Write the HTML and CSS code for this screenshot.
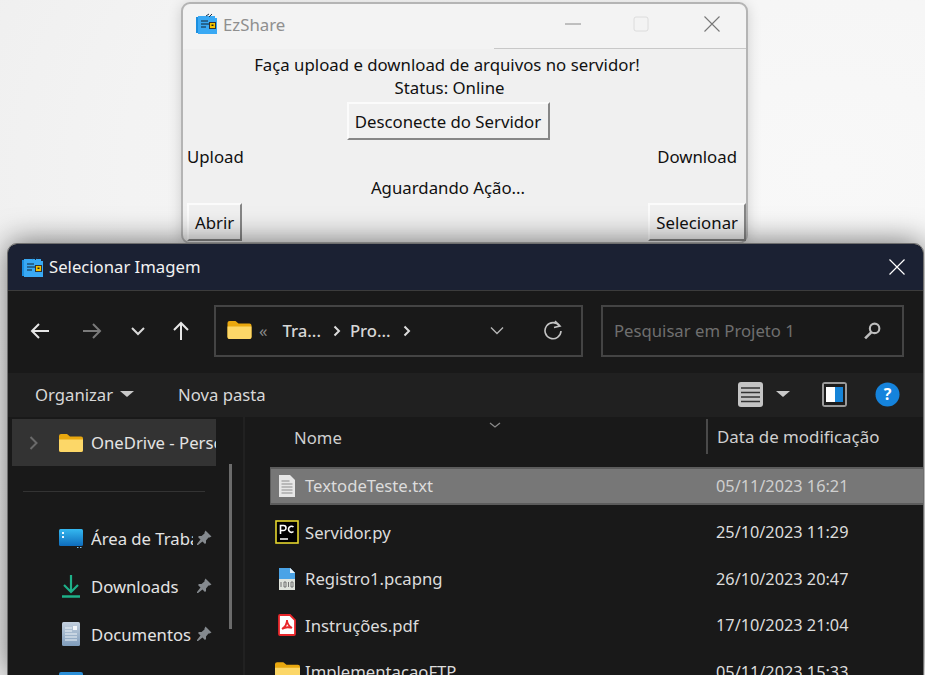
FILE: index.html
```html
<!DOCTYPE html>
<html lang="pt-BR">
<head>
  <meta charset="UTF-8">
  <title>EzShare</title>
  <link rel="stylesheet" href="styles.css">
</head>
<body>
<svg class="defs" width="0" height="0">
  <defs>
    <linearGradient id="deskGrad" x1="0" y1="0" x2="0" y2="1">
      <stop offset="0" stop-color="#35b8f0"/>
      <stop offset="1" stop-color="#0e6cbc"/>
    </linearGradient>
    <linearGradient id="docGrad" x1="0" y1="0" x2="0" y2="1">
      <stop offset="0" stop-color="#c3d0de"/>
      <stop offset="1" stop-color="#7f9cbb"/>
    </linearGradient>
    <symbol id="app" viewBox="0 0 22 22">
      <path d="M0 4h2v16H0z" fill="#1b8fe0"/>
      <path d="M2 3h17v2h2v16H2z" fill="#39a9f4"/>
      <path d="M10 3l3-2M13 4l3-3" stroke="#14324d" stroke-width="1"/>
      <path d="M5 8h7M5 11h8M5 14h5" stroke="#123" stroke-width="1"/>
      <rect x="13.500" y="9.500" width="6" height="6" fill="#f4c400" stroke="#333" stroke-width="1"/>
      <rect x="15.500" y="11.500" width="2" height="1.500" fill="#222"/>
    </symbol>
    <symbol id="folder" viewBox="0 0 24 20">
      <path d="M0 3a2 2 0 0 1 2-2h6l3 2.500h11a2 2 0 0 1 2 2V17a2 2 0 0 1-2 2H2a2 2 0 0 1-2-2z" fill="#e9a80f"/>
      <path d="M0 6.500h24V17a2 2 0 0 1-2 2H2a2 2 0 0 1-2-2z" fill="#fcd768"/>
    </symbol>
    <symbol id="pin" viewBox="0 0 16 16">
      <path d="M9.500 0.500l6 6-2 1-1 0-2.500 3 0 2.500-1 1-2.500-2.500L2 15l-1 0 0-1 3.500-4.500L2 7l1-1 2.500 0 3-2.500 0-1z" fill="#858a8f"/>
    </symbol>
    <symbol id="crumb-arrow" viewBox="0 0 8 12">
      <path d="M1.500 1.500L6 6l-4.500 4.500" fill="none" stroke="#dcdcdc" stroke-width="2"/>
    </symbol>
  </defs>
</svg>

<!-- janela do programa -->
<div class="tk-win">
  <div class="tk-title">
    <svg class="tk-appicon"><use href="#app"/></svg>
    <span class="tk-name">EzShare</span>
    <div class="tk-controls">
      <svg width="18" height="16" viewBox="0 0 18 16"><path d="M1 8h16" stroke="#8a8a8a"/></svg>
      <svg class="tk-restore" width="16" height="16" viewBox="0 0 16 16"><rect x="1" y="1" width="14" height="14" rx="2" fill="none" stroke="#dcdcdc" stroke-width="1"/></svg>
      <svg width="16" height="16" viewBox="0 0 16 16"><path d="M.5.500l15 15M15.500.500l-15 15" stroke="#777" stroke-width="1.100"/></svg>
    </div>
  </div>
  <div class="tk-body">
    <p class="tk-line">Faça upload e download de arquivos no servidor!</p>
    <p class="tk-line status">Status: Online</p>
    <button class="tk-btn connect">Desconecte do Servidor</button>
    <div class="tk-row labels"><span>Upload</span><span>Download</span></div>
    <p class="tk-line waiting">Aguardando Ação...</p>
    <div class="tk-row actions">
      <button class="tk-btn">Abrir</button>
      <button class="tk-btn">Selecionar</button>
    </div>
  </div>
</div>

<!-- dialogo de arquivos -->
<div class="dlg">
  <div class="dlg-title">
    <svg class="dlg-appicon"><use href="#app"/></svg>
    <span>Selecionar Imagem</span>
    <svg class="dlg-close" width="16" height="16" viewBox="0 0 16 16"><path d="M.5.500l15 15M15.500.500l-15 15" stroke="#fff" stroke-width="1.200"/></svg>
  </div>

  <div class="nav">
    <div class="nav-btns">
      <svg width="20" height="18" viewBox="0 0 20 18"><path d="M19 9H2M9 2L2 9l7 7" fill="none" stroke="#e6e6e6" stroke-width="2"/></svg>
      <svg class="nav-forward" width="20" height="18" viewBox="0 0 20 18"><path d="M1 9h17M11 2l7 7-7 7" fill="none" stroke="#7a7a7a" stroke-width="2"/></svg>
      <svg class="nav-recent" width="14" height="10" viewBox="0 0 14 10"><path d="M1 2l6 6 6-6" fill="none" stroke="#d8d8d8" stroke-width="2"/></svg>
      <svg class="nav-up" width="18" height="20" viewBox="0 0 18 20"><path d="M9 19V2M2 9l7-7 7 7" fill="none" stroke="#e6e6e6" stroke-width="2"/></svg>
    </div>
    <div class="path">
      <svg class="path-folder"><use href="#folder"/></svg>
      <span class="crumb-more">«</span>
      <span class="crumb">Tra...</span>
      <svg class="crumb-sep"><use href="#crumb-arrow"/></svg>
      <span class="crumb">Pro...</span>
      <svg class="crumb-sep"><use href="#crumb-arrow"/></svg>
      <svg class="path-down" width="14" height="9" viewBox="0 0 14 9"><path d="M1 1.500l6 6 6-6" fill="none" stroke="#b5b5b5" stroke-width="1.400"/></svg>
      <svg class="path-reload" width="20" height="20" viewBox="0 0 20 20"><path d="M16.500 6A8 8 0 1 0 18 11" fill="none" stroke="#c4c4c4" stroke-width="1.600"/><path d="M12 1l5 5-6 1.500" fill="none" stroke="#c4c4c4" stroke-width="1.600"/></svg>
    </div>
    <div class="search">
      <span>Pesquisar em Projeto 1</span>
      <svg width="19" height="19" viewBox="0 0 18 18"><circle cx="11" cy="7" r="4.500" fill="none" stroke="#bdbdbd" stroke-width="2"/><path d="M8 10.500L2 16.500" stroke="#bdbdbd" stroke-width="2.500"/></svg>
    </div>
  </div>

  <div class="toolbar">
    <span class="tool organize">Organizar <i class="caret"></i></span>
    <span class="tool">Nova pasta</span>
    <div class="tool-right">
      <svg width="25" height="25" viewBox="0 0 25 25"><rect width="25" height="25" rx="3" fill="#c4c4c4"/><path d="M3 6h19M3 10.500h19M3 15h19M3 19.500h19" stroke="#333" stroke-width="1.500"/></svg>
      <i class="caret view-caret"></i>
      <svg class="pane-icon" width="25" height="25" viewBox="0 0 25 25"><rect width="25" height="25" rx="3" fill="#9a9a9a"/><rect x="2" y="2" width="21" height="21" fill="#1c1c1c"/><rect x="4" y="5" width="9" height="15" fill="#fff"/><rect x="13" y="5" width="8" height="15" fill="#1584d8"/></svg>
      <svg width="25" height="25" viewBox="0 0 25 25"><circle cx="12.500" cy="12.500" r="12" fill="#1583dc"/><text x="12.500" y="18" class="help-mark" text-anchor="middle">?</text></svg>
    </div>
  </div>

  <div class="main">
    <div class="side">
      <div class="side-item onedrive">
        <svg class="side-arrow" width="9" height="14" viewBox="0 0 9 14"><path d="M1.500 1l6 6-6 6" fill="none" stroke="#6a6a6a" stroke-width="2"/></svg>
        <svg class="side-icon"><use href="#folder"/></svg>
        <span class="side-label wide">OneDrive - Personal</span>
      </div>
      <hr class="side-rule">
      <div class="side-item">
        <svg class="side-icon tall" viewBox="0 0 24 24"><rect y="3" width="24" height="17" rx="1.500" fill="url(#deskGrad)"/><rect x="3" y="6" width="2" height="2" fill="#eaf7ff"/><rect x="3" y="10" width="2" height="2" fill="#eaf7ff"/><rect x="18" y="21" width="1.500" height="1" fill="#7fc4ee"/><rect x="21" y="21" width="1.500" height="1" fill="#7fc4ee"/></svg>
        <span class="side-label">Área de Trabalho</span>
        <svg class="pin"><use href="#pin"/></svg>
      </div>
      <div class="side-item">
        <svg class="side-icon tall" viewBox="0 0 24 24"><path d="M12 1v17M5 11l7 7 7-7" fill="none" stroke="#1eb089" stroke-width="2.200"/><path d="M3 22.500h18" stroke="#1eb089" stroke-width="2.500"/></svg>
        <span class="side-label">Downloads</span>
        <svg class="pin"><use href="#pin"/></svg>
      </div>
      <div class="side-item">
        <svg class="side-icon tall" viewBox="0 0 24 24"><rect x="3" y="0" width="18" height="24" rx="1.500" fill="url(#docGrad)"/><path d="M6 6h7M6 9h7M6 12h12M6 15h12M6 18h12" stroke="#eef3f8" stroke-width="1.200"/><rect x="14" y="4" width="4" height="4" fill="#f4f7fa"/></svg>
        <span class="side-label">Documentos</span>
        <svg class="pin"><use href="#pin"/></svg>
      </div>
      <div class="side-item">
        <svg class="side-icon" viewBox="0 0 24 20"><rect width="24" height="20" rx="2" fill="#2b8fd8"/></svg>
      </div>
      <div class="side-scroll"></div>
    </div>

    <div class="files">
      <div class="files-head">
        <span class="col-name">Nome</span>
        <svg class="sort" width="12" height="6" viewBox="0 0 12 6"><path d="M1 1l5 4 5-4" fill="none" stroke="#8a8a8a" stroke-width="1.300"/></svg>
        <span class="col-date">Data de modificação</span>
      </div>
      <div class="row selected">
        <svg class="file-icon" viewBox="0 0 18 22"><path d="M1 0h11l5 5v17H1z" fill="#e6e6e6"/><path d="M3.500 6h8M3.500 9h11M3.500 12h11M3.500 15h11M3.500 18h11" stroke="#8c8c8c" stroke-width="1"/></svg>
        <span class="file-name">TextodeTeste.txt</span>
        <span class="file-date">05/11/2023 16:21</span>
      </div>
      <div class="row">
        <svg class="file-icon wide" viewBox="0 0 24 24"><rect x="1" y="1" width="22" height="22" fill="#000" stroke="#e4d52d" stroke-width="1.600"/><path d="M5.500 14V5.500h3a2.300 2.300 0 0 1 0 5h-3M18.500 7a3 3 0 0 0-5 2 3 3 0 0 0 5 2.500M5 19h8" fill="none" stroke="#fff" stroke-width="1.600"/></svg>
        <span class="file-name">Servidor.py</span>
        <span class="file-date">25/10/2023 11:29</span>
      </div>
      <div class="row">
        <svg class="file-icon" viewBox="0 0 18 22"><path d="M1 0h11l5 5v17H1z" fill="#dfe3dc"/><path d="M1 0h11l5 5v6H1z" fill="#4aa3e6"/><path d="M12 0v5h5z" fill="#e8f3fb"/><path d="M3 14v5M6 14h2v5H6zM10.500 14v5M13 14h2v5h-2z" fill="none" stroke="#666" stroke-width=".9"/></svg>
        <span class="file-name">Registro1.pcapng</span>
        <span class="file-date">26/10/2023 20:47</span>
      </div>
      <div class="row">
        <svg class="file-icon" viewBox="0 0 18 22"><path d="M2 1h10l5 5v14a1 1 0 0 1-1 1H2a1 1 0 0 1-1-1V2a1 1 0 0 1 1-1z" fill="#fff" stroke="#e8262a" stroke-width="1.800"/><path d="M9 6c0 3-2 7-5 9M9 6c0 3 2 6 5 8M4 15c3-2 7-2 10-1" fill="none" stroke="#e8262a" stroke-width="1.800"/></svg>
        <span class="file-name">Instruções.pdf</span>
        <span class="file-date">17/10/2023 21:04</span>
      </div>
      <div class="row">
        <svg class="file-icon wide-folder"><use href="#folder"/></svg>
        <span class="file-name">ImplementacaoFTP</span>
        <span class="file-date">05/11/2023 15:33</span>
      </div>
    </div>
  </div>
</div>
</body>
</html>
```

FILE: styles.css
```css
html, body {
  margin: 0;
  height: 100%;
  overflow: hidden;
}

body {
  background: radial-gradient(ellipse at 830px 170px, #f8f8f8 0, #f3f3f3 60%, #eaeaea 100%);
  font-family: "Noto Sans", sans-serif;
  position: relative;
}

.defs {
  position: absolute;
}

/* janela do programa */
.tk-win {
  position: absolute;
  left: 181px;
  top: 2px;
  width: 563px;
  height: 238px;
  background: #f0f0f0;
  border: 2px solid #b4b4b4;
  border-radius: 9px;
  box-shadow: 0 2px 14px rgba(0, 0, 0, 0.16);
  color: #111;
  font-size: 16.800px;
}

.tk-title {
  height: 45px;
  display: flex;
  align-items: center;
  padding: 0 0 5px 13px;
  box-sizing: border-box;
  background: #f3f3f3;
  border-radius: 9px 9px 0 0;
  position: relative;
}

.tk-title::after {
  content: "";
  position: absolute;
  left: 311px;
  right: 0;
  bottom: 0;
  height: 1px;
  background: #c8c8c8;
}

.tk-appicon {
  width: 22px;
  height: 22px;
}

.tk-name {
  margin-left: 5px;
  color: #8f8f8f;
}

.tk-controls {
  margin-left: auto;
  display: flex;
  align-items: center;
  padding-right: 26px;
}

.tk-restore {
  margin: 0 55px 0 51px;
}

.tk-body {
  display: flex;
  flex-direction: column;
  align-items: center;
  padding-right: 33px;
}

.tk-line {
  margin: 0;
  line-height: 23px;
  white-space: nowrap;
}

.tk-line:first-child {
  margin: 4px 2px 0 0;
}

.status {
  margin-left: 3px;
}

.tk-btn {
  font: inherit;
  color: inherit;
  background: #f0f0f0;
  height: 38px;
  padding: 0 6px;
  border: 2px solid;
  border-color: #fbfbfb #868686 #868686 #fbfbfb;
  white-space: nowrap;
}

.connect {
  margin-top: 3px;
  width: 203px;
  padding: 0;
}

.tk-row {
  align-self: stretch;
  display: flex;
  justify-content: space-between;
  margin-right: -33px;
}

.labels {
  margin-top: 5px;
  padding: 0 9px 0 4px;
  line-height: 23px;
}

.waiting {
  margin-top: 8px;
}

.actions {
  margin-top: 4px;
  padding-left: 4px;
}

/* dialogo de arquivos */
.dlg {
  position: absolute;
  left: 8px;
  top: 244px;
  width: 915px;
  height: 431px;
  overflow: hidden;
  background: #191919;
  border-radius: 9px 9px 0 0;
  outline: 1px solid #6e6e6e;
  box-shadow: 0 -2px 30px rgba(0, 0, 0, 0.55);
  color: #e4e4e4;
  font-size: 16.700px;
}

.dlg-title {
  height: 47px;
  display: flex;
  align-items: center;
  box-sizing: border-box;
  padding: 0 18px 1px 14px;
  background: #1b2133;
  border-radius: 9px 9px 0 0;
  border-bottom: 1px solid #3c3c3c;
  color: #f2f2f2;
}

.dlg-appicon {
  width: 22px;
  height: 22px;
  margin-right: 5px;
}

.dlg-close {
  margin-left: auto;
}

.nav {
  height: 82px;
  display: flex;
  align-items: flex-start;
  padding-top: 14px;
  box-sizing: border-box;
}

.nav-btns {
  display: flex;
  align-items: center;
  height: 52px;
  width: 206px;
  padding-left: 22px;
  box-sizing: border-box;
}

.nav-forward {
  margin-left: 32px;
}

.nav-recent {
  margin-left: 29px;
}

.nav-up {
  margin-left: 27px;
}

.path, .search {
  height: 52px;
  box-sizing: border-box;
  border: 2px solid #444;
  display: flex;
  align-items: center;
  padding-bottom: 2px;
}

.path {
  width: 369px;
  padding-left: 11px;
  padding-right: 18px;
  color: #d6d6d6;
}

.path-folder {
  width: 25px;
  height: 20px;
  margin-right: 7px;
}

.crumb-more {
  color: #8a8a8a;
  margin-right: 15px;
}

.crumb {
  font-weight: 500;
}

.crumb-sep {
  width: 8px;
  height: 12px;
  margin: 2px 9px 0 12px;
}

.path-down {
  margin-left: auto;
}

.path-reload {
  margin-left: 39px;
}

.search {
  margin-left: 18px;
  width: 303px;
  padding: 0 20px 2px 11px;
  color: #6f6f6f;
  justify-content: space-between;
}

.toolbar {
  height: 44px;
  background: #202020;
  display: flex;
  align-items: center;
  box-sizing: border-box;
  padding: 0 23px 2px 27px;
  color: #d8d8d8;
}

.tool {
  display: flex;
  align-items: center;
}

.organize {
  margin-right: 44px;
  gap: 7px;
}

.caret {
  width: 0;
  height: 0;
  border: 7px solid transparent;
  border-top: 6px solid #c8c8c8;
  border-bottom: 0;
}

.tool-right {
  margin-left: auto;
  display: flex;
  align-items: center;
}

.view-caret {
  margin-left: 13px;
}

.pane-icon {
  margin: 0 28px 0 32px;
}

.help-mark {
  font: 700 16px "Noto Sans", sans-serif;
  fill: #fff;
}

.main {
  display: flex;
  height: 258px;
}

.side {
  position: relative;
  width: 237px;
  flex: none;
  border-right: 2px solid #212121;
  box-sizing: border-box;
  padding: 2px 0 0 4px;
}

.side-item {
  display: flex;
  align-items: center;
  height: 48px;
  padding-left: 47px;
  position: relative;
  width: 204px;
  box-sizing: border-box;
  overflow: hidden;
}

.onedrive {
  height: 47px;
  background: #333;
}

.side-arrow {
  position: absolute;
  left: 17px;
  top: 17px;
}

.side-icon {
  width: 24px;
  height: 20px;
  flex: none;
}

.side-icon.tall {
  height: 24px;
}

.side-label {
  margin-left: 8px;
  width: 102px;
  white-space: nowrap;
  overflow: hidden;
  flex: none;
}

.side-label.wide {
  width: 126px;
}

.pin {
  width: 16px;
  height: 16px;
  margin-left: 3px;
  flex: none;
}

.side-rule {
  border: 0;
  height: 1px;
  background: #333;
  margin: 25px 0 22px 11px;
  width: 182px;
}

.side-scroll {
  position: absolute;
  left: 221px;
  top: 47px;
  width: 3px;
  height: 165px;
  background: #6b6b6b;
}

.files {
  flex: 1;
  min-width: 0;
  display: flex;
  flex-direction: column;
  gap: 8.500px;
  padding-left: 25px;
}

.files-head {
  height: 41px;
  position: relative;
  display: flex;
  align-items: center;
  color: #cfcfcf;
  flex: none;
}

.col-name {
  margin-left: 24px;
}

.sort {
  position: absolute;
  left: 219px;
  top: 5px;
}

.col-date {
  position: absolute;
  left: 436px;
  top: 2px;
  bottom: 4px;
  border-left: 2px solid #4a4a4a;
  padding-left: 9px;
  display: flex;
  align-items: center;
  white-space: nowrap;
  font-size: 16.900px;
}

.row {
  height: 38px;
  flex: none;
  display: flex;
  align-items: center;
  box-sizing: border-box;
  padding-left: 8px;
  color: #dcdcdc;
  white-space: nowrap;
}

.selected {
  background: #777;
  border-top: 2px solid #5c5c5c;
  border-bottom: 2px solid #5c5c5c;
  border-left: 1px solid #5c5c5c;
  padding-left: 7px;
}

.file-icon {
  width: 18px;
  height: 22px;
  flex: none;
  margin-right: 9px;
}

.file-icon.wide {
  width: 24px;
  height: 24px;
  margin: 0 6px 0 -3px;
}

.file-icon.wide-folder {
  width: 25px;
  height: 21px;
  margin: 0 5px 0 -3px;
}

.file-name {
  width: 411px;
  flex: none;
}

.file-date {
  font-size: 16.300px;
}

.selected .file-date {
  color: #cfcfcf;
}
```
